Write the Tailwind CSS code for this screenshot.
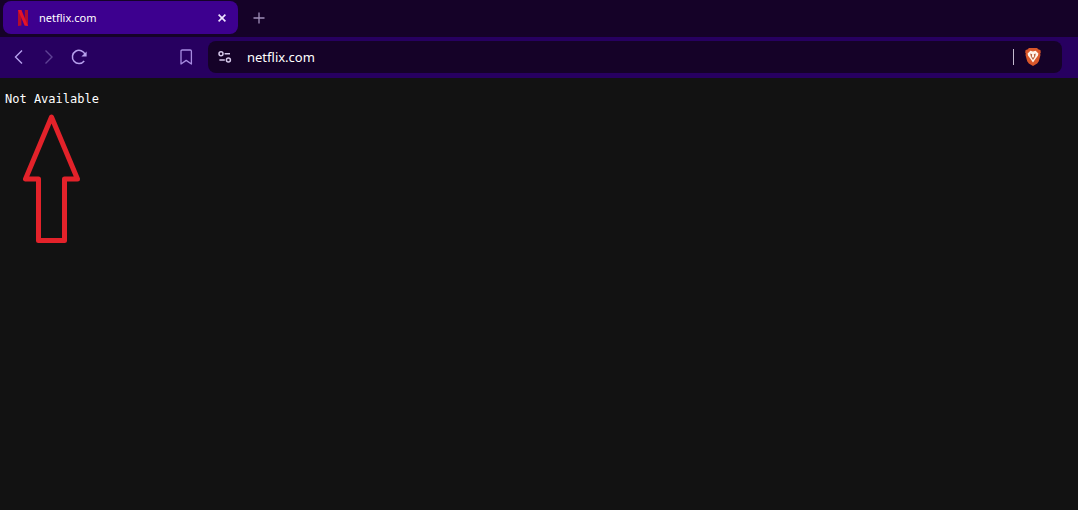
<!doctype html>
<html lang="en">

<head>
    <meta charset="UTF-8" />
    <meta name="viewport" content="width=device-width, initial-scale=1.0" />
    <title>netflix.com</title>
    <script src="https://cdn.jsdelivr.net/npm/@tailwindcss/browser@4"></script>
</head>

<body class="min-h-screen bg-[#121212] text-white font-['Noto_Sans',sans-serif]">

    <!-- tab strip -->
    <div class="flex items-center h-[37px] pl-[3px] pb-[2px] bg-[#150228]">
        <div class="flex items-center w-[235px] h-[33px] pl-[14px] pr-2 rounded-lg bg-[#3d008f]">
            <svg class="w-3 h-4 shrink-0" viewBox="0 0 12 16">
                <path d="M1 0h3.4v15.6L1 16z M7.8 0H11v16l-3.2-.4z" fill="#b30d2c" />
                <path d="M1 0h3.4L11 16l-3.4-.4z" fill="#e5132a" />
            </svg>
            <span class="ml-[10px] text-[11px] leading-4">netflix.com</span>
            <button class="ml-auto w-4 h-4 flex items-center justify-center" aria-label="Close tab">
                <svg class="w-2 h-2" viewBox="0 0 8 8" fill="none" stroke="#f0e6ff" stroke-width="1.6">
                    <path d="M.6.6l6.8 6.8M7.4.6L.6 7.4" />
                </svg>
            </button>
        </div>
        <button class="ml-[13px] w-4 h-4 flex items-center justify-center" aria-label="New tab">
            <svg class="w-3 h-3" viewBox="0 0 12 12" fill="none" stroke="#9f8fb8" stroke-width="1.3">
                <path d="M6 .5v11M.5 6h11" />
            </svg>
        </button>
    </div>

    <!-- toolbar -->
    <div class="flex items-center h-[41px] pl-[10px] pr-4 pb-[2px] bg-[#270060]">
        <button class="w-[18px] h-[18px]" aria-label="Back">
            <svg class="w-[18px] h-[18px]" viewBox="0 0 18 18" fill="none" stroke="#b7a0ee" stroke-width="1.4">
                <path d="M12 2.5L5.5 9l6.5 6.5" />
            </svg>
        </button>
        <button class="ml-3 w-[18px] h-[18px]" aria-label="Forward">
            <svg class="w-[18px] h-[18px]" viewBox="0 0 18 18" fill="none" stroke="#5f4295" stroke-width="1.4">
                <path d="M5.5 2.5L12 9l-6.500 6.500" />
            </svg>
        </button>
        <button class="ml-3 w-[18px] h-[18px]" aria-label="Reload">
            <svg class="w-[18px] h-[18px]" viewBox="0 0 18 18" fill="none" stroke="#b7a0ee" stroke-width="1.5">
                <path d="M14.2 13A6.6 6.6 0 1 1 15.2 6.600" />
                <path d="M16.600 3.600v5h-5.200z" fill="#b7a0ee" stroke="none" />
            </svg>
        </button>
        <button class="ml-[89px] w-[18px] h-[18px]" aria-label="Bookmark">
            <svg class="w-[18px] h-[18px]" viewBox="0 0 18 18" fill="none" stroke="#a68ae0" stroke-width="1.3" stroke-linejoin="round">
                <path d="M4 3.2Q4 2 5.2 2h8Q14.4 2 14.4 3.2V16l-5.2-3.6L4 16z" />
            </svg>
        </button>
        <div class="ml-[13px] flex grow items-center h-8 pl-2 pr-[21px] rounded-lg bg-[#150228]">
            <button class="w-[18px] h-[18px] shrink-0" aria-label="Site settings">
                <svg class="w-[18px] h-[18px]" viewBox="0 0 18 18" fill="none" stroke="#d5c8ea" stroke-width="1.5">
                    <circle cx="5" cy="5.8" r="2" />
                    <path d="M8.6 5.8h5.4M3.4 12h5.4" />
                    <circle cx="12.4" cy="12" r="2" />
                </svg>
            </button>
            <input class="ml-[13px] grow min-w-0 bg-transparent text-[13px] leading-5 outline-none" type="text" value="netflix.com" aria-label="Address" />
            <div class="w-px h-4 bg-[#c4bacf]"></div>
            <button class="ml-[11px] w-4 h-[18px] shrink-0" aria-label="Brave Shields">
                <svg class="w-4 h-[18px]" viewBox="0 0 16 18">
                    <path d="M4 0h8l1.6 1.6L15.4 2l.4 2.4-.6 1.2.3 1.4-1.7 6.2-1.6 2.2L8 18l-4.2-2.6-1.6-2.2L.5 7l.3-1.4L.2 4.4.6 2l1.8-.4z" fill="#d9572a" />
                    <path d="M8 3.6l2.6-.8 2.8 2.7-.5 2.3-2.5 3.3L8 14.6l-2.4-3.5-2.5-3.3-.5-2.3 2.8-2.7z" fill="#fff3e9" />
                    <path d="M5.2 5.4l2 .8-.4 2.2L8 10l1.2-1.6-.4-2.2 2-.8-.6 3L8 12 5.8 8.4z" fill="#b9603c" />
                </svg>
            </button>
        </div>
    </div>

    <!-- page -->
    <main class="px-[5px] pt-3">
        <p class="font-['DejaVu_Sans_Mono',monospace] text-[12px] leading-[18px]">Not Available</p>
        <svg class="mt-[5px] ml-4 w-[60px] h-[132px]" viewBox="0 0 60 132" fill="none" stroke="#e3222a" stroke-width="5" stroke-linejoin="round">
            <path d="M30.5 4L4.5 66H17.500V127.500H43.500V66H56.500z" />
        </svg>
    </main>

</body>

</html>
